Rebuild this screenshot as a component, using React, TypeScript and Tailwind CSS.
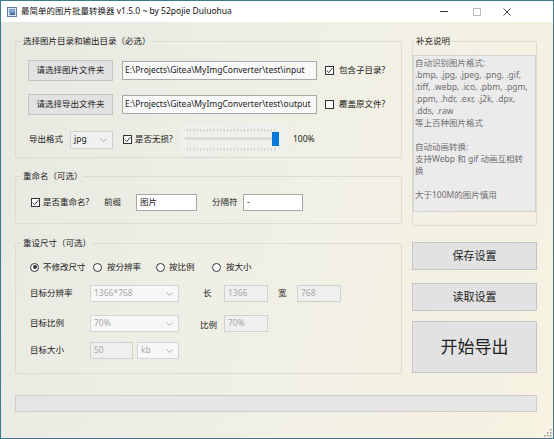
import React from 'react';

// Small WinForms-like building blocks
function CheckBox({ checked = false, className = '' }: { checked?: boolean; className?: string }) {
  return (
    <span className={`w-[9px] h-[9px] shrink-0 border border-[#333] bg-white flex items-center justify-center ${className}`}>
      {checked && (
        <svg width="7" height="7" viewBox="0 0 7 7">
          <polyline points="0.8,3.6 2.7,5.6 6.3,1.2" fill="none" stroke="#333" strokeWidth="1" />
        </svg>
      )}
    </span>
  );
}

function Radio({ checked = false }: { checked?: boolean }) {
  return (
    <span className="w-[9px] h-[9px] shrink-0 rounded-full border border-[#333] bg-white flex items-center justify-center">
      {checked && <span className="w-[4px] h-[4px] rounded-full bg-[#333]" />}
    </span>
  );
}

function Btn({ className = '', children }: { className?: string; children: React.ReactNode }) {
  return (
    <div className={`shrink-0 border border-[#c4c4c4] bg-[#e2e2e2] flex items-center justify-center text-[#222] ${className}`}>
      {children}
    </div>
  );
}

function Chevron() {
  return (
    <svg width="7" height="4" viewBox="0 0 7 4" className="shrink-0">
      <polyline points="0.5,0.5 3.5,3.5 6.5,0.5" fill="none" stroke="#9a9a9a" strokeWidth="0.8" />
    </svg>
  );
}

function Select({ value, disabled = false, className = '' }: { value: string; disabled?: boolean; className?: string }) {
  return (
    <div
      className={`shrink-0 h-[17px] border flex items-center justify-between pl-[3px] pr-[5px] ${
        disabled ? 'border-[#d4d4d4] bg-[#f7f7f7] text-[#a8a8a8]' : 'border-[#d0d0d0] bg-[#f0f0f0] text-[#222]'
      } ${className}`}
    >
      <span>{value}</span>
      <Chevron />
    </div>
  );
}

function Field({ value, disabled = false, className = '' }: { value: string; disabled?: boolean; className?: string }) {
  return (
    <div
      className={`shrink-0 h-[17px] border flex items-center px-[3px] ${
        disabled ? 'border-[#d0d0d0] bg-[#efefef] text-[#a8a8a8]' : 'border-[#a8a8a8] bg-white text-[#222]'
      } ${className}`}
    >
      {value}
    </div>
  );
}

function Group({ title, className = '', legendClass = '', children }: { title: string; className?: string; legendClass?: string; children: React.ReactNode }) {
  return (
    <fieldset className={`border border-[#dcdcd2] rounded-[2px] px-[6px] ${className}`}>
      <legend className={`px-[1px] leading-[12px] text-[#222] ${legendClass}`}>{title}</legend>
      {children}
    </fieldset>
  );
}

function Slider() {
  const ticks = Array.from({ length: 27 }).map((_, i) => 7 + i * 3.38);
  return (
    <svg width="105" height="31" viewBox="0 0 105 31" className="shrink-0">
      <rect x="0" y="0" width="105" height="31" fill="#efefec" />
      {ticks.map((x, i) => (
        <g key={i}>
          <line x1={x} y1="5" x2={x} y2="7.5" stroke="#b4b4b4" strokeWidth="0.7" />
          <line x1={x} y1="24" x2={x} y2="26.5" stroke="#b4b4b4" strokeWidth="0.7" />
        </g>
      ))}
      <rect x="5" y="13.5" width="92" height="2" fill="#dadada" stroke="#d0d0d0" strokeWidth="0.5" />
      <rect x="92" y="8" width="7" height="14" fill="#0078d7" />
    </svg>
  );
}

const notes = `自动识别图片格式:
.bmp, .jpg, .jpeg, .png, .gif,
.tiff, .webp, .ico, .pbm, .pgm,
.ppm, .hdr, .exr, .j2k, .dpx,
.dds, .raw
等上百种图片格式

自动动画转换:
支持Webp 和 gif 动画互相转
换

大于100M的图片慎用`;

export default function App() {
  return (
    <div className="w-[554px] h-[439px] border border-[#3b7a8b] flex flex-col overflow-hidden text-[8.5px] text-[#333] font-['Noto_Sans','Noto_Sans_CJK_SC',sans-serif]">
      {/* Title bar */}
      <div className="h-[21px] shrink-0 bg-white flex items-center pl-[6px] pr-[32px]">
        <svg width="10" height="10" viewBox="0 0 10 10" className="shrink-0">
          <rect x="0.5" y="0.5" width="9" height="9" fill="#dfe8f2" stroke="#5a7fa8" strokeWidth="1" />
          <rect x="2" y="2" width="6" height="4" fill="#7fa6d1" />
          <polygon points="2,8 4.5,5 6,6.5 8,4.5 8,8" fill="#3f6e9e" />
        </svg>
        <span className="ml-[4px] text-[#111]">最简单的图片批量转换器 v1.5.0 ~ by 52pojie Duluohua</span>
        <div className="ml-auto flex items-center h-full">
          <span className="w-[33px] flex justify-center">
            <span className="w-[8px] h-[1px] bg-[#333]" />
          </span>
          <span className="w-[33px] flex justify-center">
            <span className="w-[8px] h-[8px] border border-[#bdbdbd]" />
          </span>
          <span className="w-[28px] flex justify-center">
            <svg width="8" height="8" viewBox="0 0 8 8">
              <path d="M0.5 0.5 L7.5 7.5 M7.5 0.5 L0.5 7.5" stroke="#333" strokeWidth="0.9" />
            </svg>
          </span>
        </div>
      </div>

      {/* Body */}
      <div className="relative flex-1 pt-[13px] pl-[14px] pr-[15px] bg-[linear-gradient(105deg,#e7e9e0,#efefe6_45%,#f7f2e1)]">
        <div className="flex gap-[10px]">
          {/* Left column */}
          <div className="w-[387px] flex flex-col">
            <Group title="选择图片目录和输出目录（必选）" className="h-[123px]">
              <div className="mt-[13px] ml-[6px] flex items-center h-[21px]">
                <Btn className="w-[85px] h-[21px]">请选择图片文件夹</Btn>
                <div className="ml-[9px] w-[195px] h-[19px] border border-[#a8a8a8] bg-[#f9f9f9] px-[2px] flex items-center text-[#222] whitespace-nowrap overflow-hidden">
                  E:\Projects\Gitea\MyImgConverter\test\input
                </div>
                <CheckBox className="ml-[8px]" checked />
                <span className="ml-[5px] text-[#222]">包含子目录?</span>
              </div>
              <div className="mt-[13px] ml-[6px] flex items-center h-[21px]">
                <Btn className="w-[85px] h-[21px]">请选择导出文件夹</Btn>
                <div className="ml-[9px] w-[195px] h-[19px] border border-[#a8a8a8] bg-[#f9f9f9] px-[2px] flex items-center text-[#222] whitespace-nowrap overflow-hidden">
                  E:\Projects\Gitea\MyImgConverter\test\output
                </div>
                <CheckBox className="ml-[8px]" />
                <span className="ml-[5px] text-[#222]">覆盖原文件?</span>
              </div>
              <div className="mt-[9px] ml-[7px] flex items-center h-[31px]">
                <span className="w-[41px] text-[#222]">导出格式</span>
                <Select value="jpg" className="w-[43px] h-[18px]" />
                <CheckBox className="ml-[10px]" checked />
                <span className="ml-[3px] w-[45px] text-[#222]">是否无损?</span>
                <Slider />
                <span className="ml-[8px] text-[#222]">100%</span>
              </div>
            </Group>

            <Group title="重命名（可选）" className="mt-[12px] h-[54px]">
              <div className="mt-[12px] ml-[9px] flex items-center h-[17px] text-[#222]">
                <CheckBox checked />
                <span className="ml-[3px] w-[61px]">是否重命名?</span>
                <span className="w-[32px]">前缀</span>
                <Field value="图片" className="w-[61px]" />
                <span className="ml-[15px] w-[31px]">分隔符</span>
                <Field value="-" className="w-[60px]" />
              </div>
            </Group>

            <Group title="重设尺寸（可选）" className="mt-[13px] h-[137px]">
              <div className="mt-[12px] ml-[8px] flex items-center h-[12px] text-[#222]">
                <span className="w-[63px] flex items-center gap-[4px]">
                  <Radio checked />
                  不修改尺寸
                </span>
                <span className="w-[63px] flex items-center gap-[5px]">
                  <Radio />
                  按分辨率
                </span>
                <span className="w-[56px] flex items-center gap-[4px]">
                  <Radio />
                  按比例
                </span>
                <span className="flex items-center gap-[5px]">
                  <Radio />
                  按大小
                </span>
              </div>
              <div className="mt-[12px] ml-[8px] flex items-center h-[17px] text-[#222]">
                <span className="w-[60px]">目标分辨率</span>
                <Select value="1366*768" disabled className="w-[89px]" />
                <span className="w-[45px] pl-[24px]">长</span>
                <Field value="1366" disabled className="w-[44px]" />
                <span className="w-[29px] pl-[10px]">宽</span>
                <Field value="768" disabled className="w-[44px]" />
              </div>
              <div className="mt-[13px] ml-[8px] flex items-center h-[17px] text-[#222]">
                <span className="w-[60px]">目标比例</span>
                <Select value="70%" disabled className="w-[89px]" />
                <span className="w-[45px] pl-[21px] pt-[4px]">比例</span>
                <Field value="70%" disabled className="w-[44px]" />
              </div>
              <div className="mt-[10px] ml-[8px] flex items-center h-[17px] text-[#222]">
                <span className="w-[60px]">目标大小</span>
                <Field value="50" disabled className="w-[43px]" />
                <Select value="kb" disabled className="ml-[4px] w-[42px]" />
              </div>
            </Group>
          </div>

          {/* Right column */}
          <div className="w-[125px] flex flex-col">
            <Group title="补充说明" className="h-[191px] !px-0" legendClass="ml-[2px] text-[#111]">
              <div className="mt-[8px] h-[157px] border border-[#d2d2d2] bg-[#ebebeb] pl-[1px] pt-[1px] text-[#6e6e6e] leading-[12px] whitespace-pre">
                {notes}
              </div>
            </Group>
            <Btn className="mt-[16px] w-[125px] h-[28px] text-[11px]">保存设置</Btn>
            <Btn className="mt-[13px] w-[125px] h-[28px] text-[11px]">读取设置</Btn>
            <Btn className="mt-[10px] w-[125px] h-[52px] text-[17px] text-[#111]">开始导出</Btn>
          </div>
        </div>

        {/* Progress bar */}
        <div className="mt-[21px] w-[522px] h-[17px] border border-[#cdcdcd] bg-[#e6e6e6]" />

        {/* Resize grip */}
        <svg width="8" height="8" viewBox="0 0 8 8" className="absolute right-[1px] bottom-[1px]">
          {[
            [6, 0], [6, 3], [3, 3], [6, 6], [3, 6], [0, 6],
          ].map(([x, y], i) => (
            <rect key={i} x={x} y={y} width="1.5" height="1.5" fill="#9a9a9a" />
          ))}
        </svg>
      </div>
    </div>
  );
}
